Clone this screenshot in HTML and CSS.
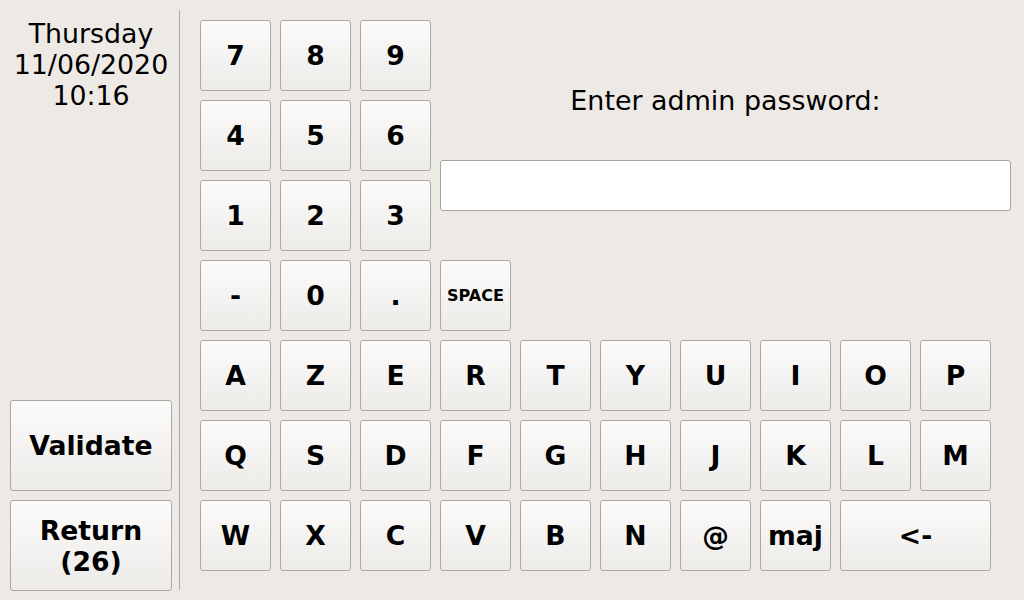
FILE: index.html
```html
<!DOCTYPE html>
<html>
<head>
<meta charset="utf-8">
<link rel="stylesheet" href="styles.css">
</head>
<body>
<div class="screen">
  <aside class="side">
    <div class="clock">Thursday<br>11/06/2020<br>10:16</div>
    <div class="actions">
      <button class="btn big">Validate</button>
      <button class="btn big">Return<br>(26)</button>
    </div>
  </aside>
  <div class="sep"></div>
  <main class="pad">
    <div class="grid">
      <button class="btn key">7</button>
      <button class="btn key">8</button>
      <button class="btn key">9</button>
      <div class="prompt">
        <div class="label">Enter admin password:</div>
        <div class="input"></div>
      </div>
      <button class="btn key">4</button>
      <button class="btn key">5</button>
      <button class="btn key">6</button>
      <button class="btn key">1</button>
      <button class="btn key">2</button>
      <button class="btn key">3</button>
      <button class="btn key">-</button>
      <button class="btn key">0</button>
      <button class="btn key">.</button>
      <button class="btn key small">SPACE</button>
      <button class="btn key row5">A</button>
      <button class="btn key">Z</button>
      <button class="btn key">E</button>
      <button class="btn key">R</button>
      <button class="btn key">T</button>
      <button class="btn key">Y</button>
      <button class="btn key">U</button>
      <button class="btn key">I</button>
      <button class="btn key">O</button>
      <button class="btn key">P</button>
      <button class="btn key row6">Q</button>
      <button class="btn key">S</button>
      <button class="btn key">D</button>
      <button class="btn key">F</button>
      <button class="btn key">G</button>
      <button class="btn key">H</button>
      <button class="btn key">J</button>
      <button class="btn key">K</button>
      <button class="btn key">L</button>
      <button class="btn key">M</button>
      <button class="btn key row7">W</button>
      <button class="btn key">X</button>
      <button class="btn key">C</button>
      <button class="btn key">V</button>
      <button class="btn key">B</button>
      <button class="btn key">N</button>
      <button class="btn key">@</button>
      <button class="btn key">maj</button>
      <button class="btn key wide">&lt;-</button>
    </div>
  </main>
</div>
</body>
</html>
```

FILE: styles.css
```css
html, body {
  margin: 0;
  padding: 0;
  width: 1024px;
  height: 600px;
  overflow: hidden;
  background: #edeae6;
  font-family: "DejaVu Sans", sans-serif;
  color: #000;
}

.screen {
  display: flex;
  width: 1024px;
  height: 600px;
}

.side {
  width: 179px;
  display: flex;
  flex-direction: column;
  justify-content: space-between;
  box-sizing: border-box;
  padding: 18px 0 9px 10px;
}

.clock {
  width: 162px;
  text-align: center;
  font-size: 26.8px;
  line-height: 31px;
}

.actions {
  display: flex;
  flex-direction: column;
  gap: 9px;
}

.sep {
  width: 1px;
  margin: 10px 0;
  background: #aeaaa6;
}

.btn {
  box-sizing: border-box;
  margin: 0;
  padding: 0;
  border: 1px solid #aba8a4;
  border-radius: 3px;
  background: linear-gradient(#fcfbfb, #edebe8);
  font-family: "DejaVu Sans", sans-serif;
  font-weight: bold;
  font-size: 26.67px;
  line-height: 31px;
  color: #000;
  display: flex;
  align-items: center;
  justify-content: center;
  text-align: center;
}

.big {
  width: 162px;
  height: 91px;
}

.pad {
  padding: 20px 0 0 20px;
}

.grid {
  display: grid;
  grid-template-columns: repeat(10, 71px) 11px;
  grid-auto-rows: 71px;
  gap: 9px;
}

.key {
  width: 71px;
  height: 71px;
}

.small {
  font-size: 16px;
}

.row5, .row6, .row7 {
  grid-column: 1;
}

.wide {
  width: auto;
  grid-column: span 2;
}

.prompt {
  grid-column: 4 / -1;
  grid-row: 1 / span 3;
  display: flex;
  flex-direction: column;
  align-items: stretch;
  padding-top: 65px;
}

.label {
  text-align: center;
  font-size: 26.9px;
  line-height: 31px;
  margin-bottom: 44px;
}

.input {
  height: 51px;
  box-sizing: border-box;
  background: #fff;
  border: 1px solid #a6a4a1;
  border-radius: 3px;
}
```
